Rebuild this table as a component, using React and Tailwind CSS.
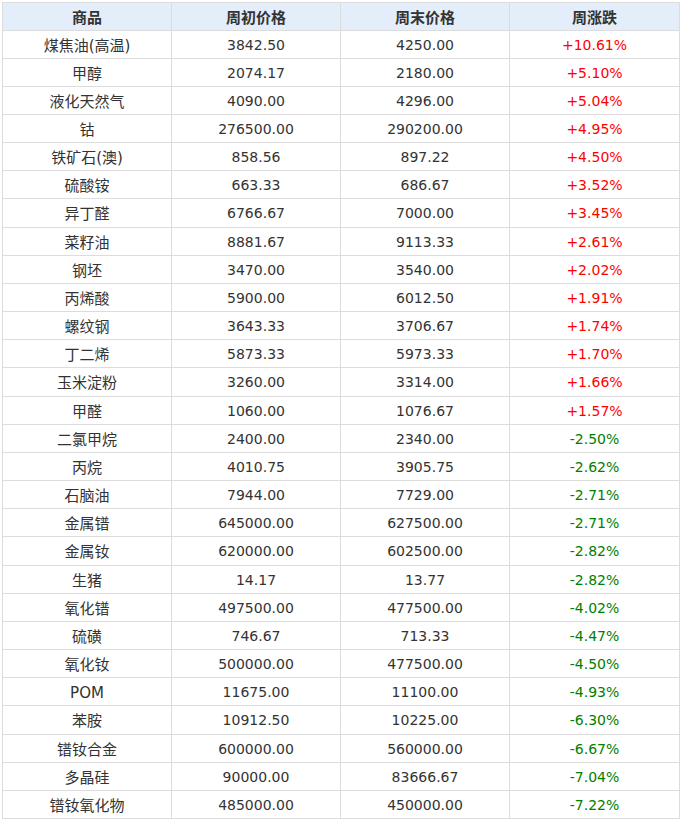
const rows = [
  ["煤焦油(高温)", "3842.50", "4250.00", "+10.61%"],
  ["甲醇", "2074.17", "2180.00", "+5.10%"],
  ["液化天然气", "4090.00", "4296.00", "+5.04%"],
  ["钴", "276500.00", "290200.00", "+4.95%"],
  ["铁矿石(澳)", "858.56", "897.22", "+4.50%"],
  ["硫酸铵", "663.33", "686.67", "+3.52%"],
  ["异丁醛", "6766.67", "7000.00", "+3.45%"],
  ["菜籽油", "8881.67", "9113.33", "+2.61%"],
  ["钢坯", "3470.00", "3540.00", "+2.02%"],
  ["丙烯酸", "5900.00", "6012.50", "+1.91%"],
  ["螺纹钢", "3643.33", "3706.67", "+1.74%"],
  ["丁二烯", "5873.33", "5973.33", "+1.70%"],
  ["玉米淀粉", "3260.00", "3314.00", "+1.66%"],
  ["甲醛", "1060.00", "1076.67", "+1.57%"],
  ["二氯甲烷", "2400.00", "2340.00", "-2.50%"],
  ["丙烷", "4010.75", "3905.75", "-2.62%"],
  ["石脑油", "7944.00", "7729.00", "-2.71%"],
  ["金属镨", "645000.00", "627500.00", "-2.71%"],
  ["金属钕", "620000.00", "602500.00", "-2.82%"],
  ["生猪", "14.17", "13.77", "-2.82%"],
  ["氧化镨", "497500.00", "477500.00", "-4.02%"],
  ["硫磺", "746.67", "713.33", "-4.47%"],
  ["氧化钕", "500000.00", "477500.00", "-4.50%"],
  ["POM", "11675.00", "11100.00", "-4.93%"],
  ["苯胺", "10912.50", "10225.00", "-6.30%"],
  ["镨钕合金", "600000.00", "560000.00", "-6.67%"],
  ["多晶硅", "90000.00", "83666.67", "-7.04%"],
  ["镨钕氧化物", "485000.00", "450000.00", "-7.22%"],
];

const heights = [28,28,28,28,28,28,29,28,28,28,28,28,29,28,28,28,28,28,29,28,28,28,28,28,29,28,28,28];

export default function App() {
  return (
    <div className="bg-white w-[681px] h-[823px] pt-[2px] pl-[2px]" style={{ fontFamily: '"DejaVu Sans", "Noto Sans CJK SC", sans-serif' }}>
      <table className="border-collapse w-[677px] table-fixed text-[14px] text-[#333]">
        <colgroup>
          <col className="w-[169px]" />
          <col className="w-[169px]" />
          <col className="w-[169px]" />
          <col className="w-[170px]" />
        </colgroup>
        <thead>
          <tr className="h-[28px] bg-[#e4edfa]">
            {["商品", "周初价格", "周末价格", "周涨跌"].map((h) => (
              <th key={h} className="border border-[#dcdcdc] font-bold p-0 text-center leading-none text-[15px] font-['Noto_Sans_CJK_SC',sans-serif]">{h}</th>
            ))}
          </tr>
        </thead>
        <tbody>
          {rows.map((r, i) => (
            <tr key={i} style={{ height: heights[i] }}>
              <td className="border border-[#dcdcdc] p-0 pt-[3px] text-center leading-none text-[15px]">{r[0]}</td>
              <td className="border border-[#dcdcdc] p-0 text-center leading-none">{r[1]}</td>
              <td className="border border-[#dcdcdc] p-0 text-center leading-none">{r[2]}</td>
              <td className={"border border-[#dcdcdc] p-0 text-center leading-none " + (r[3].startsWith("+") ? "text-[#ff0000]" : "text-[#008000]")}>{r[3]}</td>
            </tr>
          ))}
        </tbody>
      </table>
    </div>
  );
}
